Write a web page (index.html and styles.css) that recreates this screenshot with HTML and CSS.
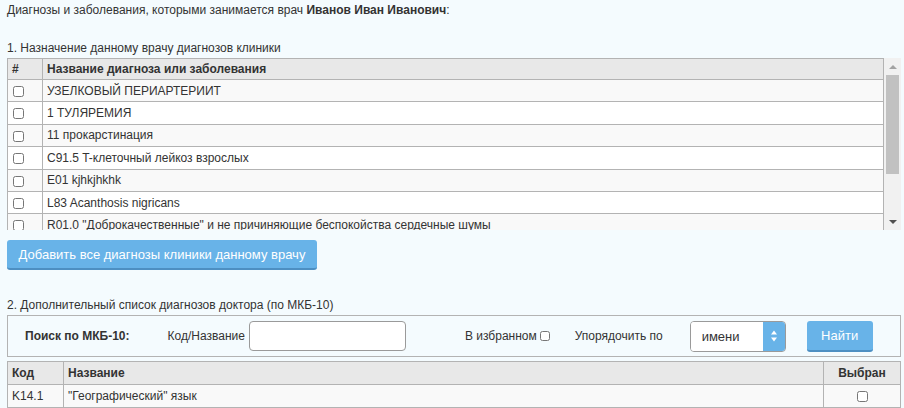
FILE: index.html
```html
<!DOCTYPE html>
<html lang="ru">
<head>
<meta charset="utf-8">
<title>Диагнозы врача</title>
<link rel="stylesheet" href="styles.css">
</head>
<body>
<div class="page">
  <p class="intro">Диагнозы и заболевания, которыми занимается врач <b>Иванов Иван Иванович</b>:</p>

  <p class="section-title first">1. Назначение данному врачу диагнозов клиники</p>
  <div class="scroll-frame">
    <div class="scroll-box">
      <table class="grid clinic">
        <thead>
          <tr><th class="c-num">#</th><th>Название диагноза или заболевания</th></tr>
        </thead>
        <tbody>
          <tr><td class="c-num"><input type="checkbox"></td><td>УЗЕЛКОВЫЙ ПЕРИАРТЕРИИТ</td></tr>
          <tr><td class="c-num"><input type="checkbox"></td><td>1 ТУЛЯРЕМИЯ</td></tr>
          <tr><td class="c-num"><input type="checkbox"></td><td>11 прокарстинация</td></tr>
          <tr><td class="c-num"><input type="checkbox"></td><td>C91.5 T-клеточный лейкоз взрослых</td></tr>
          <tr><td class="c-num"><input type="checkbox"></td><td>E01 kjhkjhkhk</td></tr>
          <tr><td class="c-num"><input type="checkbox"></td><td>L83 Acanthosis nigricans</td></tr>
          <tr><td class="c-num"><input type="checkbox"></td><td>R01.0 "Доброкачественные" и не причиняющие беспокойства сердечные шумы</td></tr>
        </tbody>
      </table>
    </div>
    <div class="vscroll" aria-hidden="true">
      <span class="vscroll-btn up"></span>
      <span class="vscroll-track"><span class="vscroll-thumb"></span></span>
      <span class="vscroll-btn down"></span>
    </div>
  </div>

  <button type="button" class="btn btn-add">Добавить все диагнозы клиники данному врачу</button>

  <p class="section-title second">2. Дополнительный список диагнозов доктора (по МКБ-10)</p>
  <form class="search-panel">
    <span class="search-label">Поиск по МКБ-10:</span>
    <label class="field-label" for="q">Код/Название</label>
    <input id="q" class="text-input" type="text">
    <label class="fav-label">В избранном<input type="checkbox" class="fav-check"></label>
    <span class="sort-label">Упорядочить по</span>
    <div class="select-wrap">
      <select class="sort-select">
        <option>имени</option>
        <option>коду</option>
      </select>
      <span class="select-arrow">
        <svg width="8" height="14" viewBox="0 0 8 14"><path d="M4 1.5 L7 5.5 L1 5.5 Z" fill="#fff"/><path d="M4 12.5 L7 8.5 L1 8.5 Z" fill="#fff"/></svg>
      </span>
    </div>
    <button type="button" class="btn btn-find">Найти</button>
  </form>

  <table class="grid mkb">
    <thead>
      <tr><th class="c-code">Код</th><th>Название</th><th class="c-sel">Выбран</th></tr>
    </thead>
    <tbody>
      <tr><td class="c-code">K14.1</td><td>"Географический" язык</td><td class="c-sel"><input type="checkbox"></td></tr>
    </tbody>
  </table>
</div>
</body>
</html>
```

FILE: styles.css
```css
html, body {
  margin: 0;
  padding: 0;
  background: #f4fbfe;
}

body {
  font-family: "Liberation Sans", Arial, sans-serif;
  font-size: 12px;
  color: #333;
}

.page {
  width: 894px;
  padding: 2px 0 0 7px;
}

.intro {
  margin: 0;
  line-height: 16px;
}

.section-title {
  margin: 0;
  line-height: 16px;
}

.section-title.first {
  margin-top: 22px;
}

.section-title.second {
  margin-top: 27px;
}

.scroll-frame {
  margin-top: 2px;
  height: 172px;
  display: flex;
}

.scroll-box {
  flex: 1;
  min-width: 0;
  overflow: hidden;
}

.vscroll {
  width: 17px;
  background: #f1f1f1;
  display: flex;
  flex-direction: column;
}

.vscroll-btn {
  height: 15px;
  display: flex;
  align-items: center;
  justify-content: center;
}

.vscroll-btn::before {
  content: "";
  width: 0;
  height: 0;
  border-left: 4px solid transparent;
  border-right: 4px solid transparent;
}

.vscroll-btn.up::before {
  border-bottom: 4px solid #a3a3a3;
  margin-top: 3px;
}

.vscroll-btn.down::before {
  border-top: 4px solid #505050;
  margin-bottom: 1px;
}

.vscroll-track {
  flex: 1;
  padding: 2px 2px 0;
}

.vscroll-thumb {
  display: block;
  height: 99px;
  background: #c1c1c1;
}

.grid {
  width: 100%;
  border-collapse: collapse;
}

.grid th,
.grid td {
  border: 1px solid #b3b3b3;
  text-align: left;
  padding: 0 4px;
  vertical-align: middle;
}

.grid th {
  background: #e8e8e8;
  font-weight: bold;
}

.grid tbody tr:nth-child(odd) td {
  background: #f9f9f9;
}

.grid tbody tr:nth-child(even) td {
  background: #fff;
}

.clinic th {
  height: 20px;
  line-height: 16px;
}

.clinic td {
  height: 21.4px;
  line-height: 16px;
}

.clinic .c-num {
  width: 26px;
}

.grid input[type="checkbox"] {
  width: 11px;
  height: 11px;
  margin: 0 0 0 1px;
  vertical-align: middle;
}

.btn {
  font-family: "Liberation Sans", Arial, sans-serif;
  color: #fff;
  background: #68b3e8;
  border: 0;
  border-bottom: 2px solid #4d8fc2;
  border-radius: 3px;
  cursor: pointer;
}

.btn-add {
  display: block;
  margin-top: 10px;
  height: 30px;
  width: 310px;
  padding: 0;
  font-size: 13px;
}

.search-panel {
  margin: 2px 0 0;
  height: 40px;
  border: 1px solid #b3b3b3;
  display: flex;
  align-items: center;
  background: #f4fbfe;
}

.search-label {
  font-weight: bold;
  margin-left: 17px;
}

.field-label {
  margin-left: 38px;
}

.text-input {
  margin-left: 4px;
  width: 155px;
  height: 28px;
  box-sizing: content-box;
  padding: 0;
  border: 1px solid #9a9a9a;
  border-radius: 4px;
  background: #fff;
}

.fav-label {
  margin-left: 59px;
  display: flex;
  align-items: center;
}

.fav-check {
  width: 10px;
  height: 10px;
  margin: 0 0 0 3px;
}

.sort-label {
  margin-left: 25px;
}

.select-wrap {
  margin-left: 27px;
  display: flex;
  width: 94px;
  height: 29px;
  border: 1px solid #9a9a9a;
  border-radius: 4px;
  overflow: hidden;
  background: #fff;
}

.sort-select {
  flex: 1;
  min-width: 0;
  appearance: none;
  -webkit-appearance: none;
  border: 0;
  background: #fff;
  font-family: "Liberation Sans", Arial, sans-serif;
  font-size: 13px;
  color: #333;
  padding: 0 0 0 11px;
  outline: none;
}

.select-arrow {
  width: 22px;
  background: #68b3e8;
  display: flex;
  align-items: center;
  justify-content: center;
}

.btn-find {
  margin-left: 21px;
  width: 66px;
  height: 31px;
  font-size: 13px;
  padding: 0;
}

.mkb {
  margin-top: 4px;
}

.mkb th {
  height: 22px;
  line-height: 16px;
}

.mkb td {
  height: 21.7px;
  line-height: 16px;
}

.mkb .c-code {
  width: 47px;
}

.mkb .c-sel {
  width: 68px;
}

.mkb th.c-sel {
  text-align: center;
}

.mkb td.c-sel {
  text-align: center;
}
```
